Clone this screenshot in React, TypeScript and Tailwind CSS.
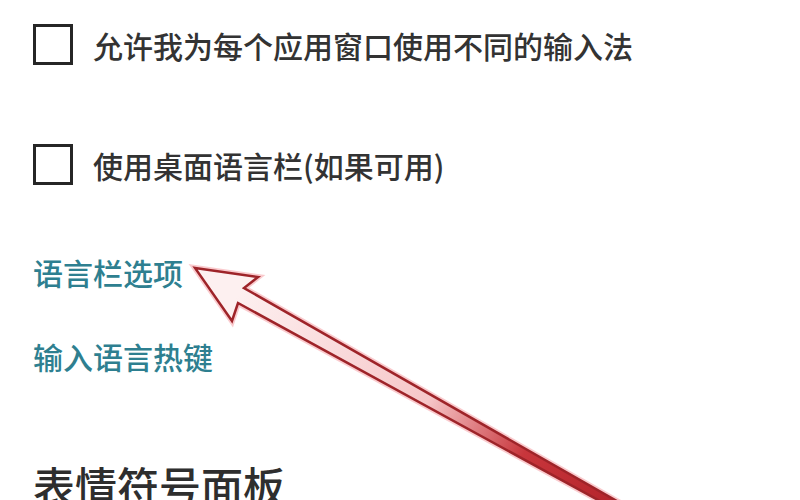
import React from "react";

const font = { fontFamily: '"Noto Sans CJK SC", "Noto Sans", sans-serif' };

function Checkbox() {
  return <div className="w-[40px] h-[41px] shrink-0 border-[3px] border-[#262626] bg-white" />;
}

export default function App() {
  return (
    <div className="relative w-[800px] h-[500px] overflow-hidden bg-white" style={font}>
      <div className="flex flex-col pl-[33px] pt-[24px]">
        <div className="flex items-center gap-[20px] h-[41px]">
          <Checkbox />
          <span className="text-[30px] leading-[40px] font-medium text-[#333333] whitespace-nowrap">
            允许我为每个应用窗口使用不同的输入法
          </span>
        </div>
        <div className="flex items-center gap-[20px] h-[41px] mt-[79px]">
          <Checkbox />
          <span className="text-[30px] leading-[40px] font-medium text-[#333333] whitespace-nowrap">
            使用桌面语言栏(如果可用)
          </span>
        </div>
        <a className="mt-[67px] text-[30px] leading-[40px] font-medium text-[#2e7f90] whitespace-nowrap">
          语言栏选项
        </a>
        <a className="mt-[44px] text-[30px] leading-[40px] font-medium text-[#2e7f90] whitespace-nowrap">
          输入语言热键
        </a>
        <h2 className="mt-[84px] text-[42px] leading-[50px] font-medium text-[#2e2e2e] whitespace-nowrap">
          表情符号面板
        </h2>
      </div>
      <svg className="absolute inset-0 pointer-events-none" width="800" height="500" viewBox="0 0 800 500">
        <defs>
          <linearGradient id="shaft" gradientUnits="userSpaceOnUse" x1="240" y1="290" x2="620" y2="505">
            <stop offset="0" stopColor="#fdf0f0" />
            <stop offset="0.5" stopColor="#f6c6c8" />
            <stop offset="0.75" stopColor="#c8363c" />
            <stop offset="1" stopColor="#b3232a" />
          </linearGradient>
        </defs>
        <polygon
          points="195,268 258,277 244,288 636,512 620,512 238,303 232,321"
          fill="none"
          stroke="#f7a9ad"
          strokeWidth="6"
          strokeLinejoin="miter"
          opacity="0.6"
        />
        <polygon
          points="195,268 258,277 244,288 636,512 620,512 238,303 232,321"
          fill="url(#shaft)"
          stroke="#9e2429"
          strokeWidth="2.5"
          strokeLinejoin="miter"
        />
      </svg>
    </div>
  );
}
